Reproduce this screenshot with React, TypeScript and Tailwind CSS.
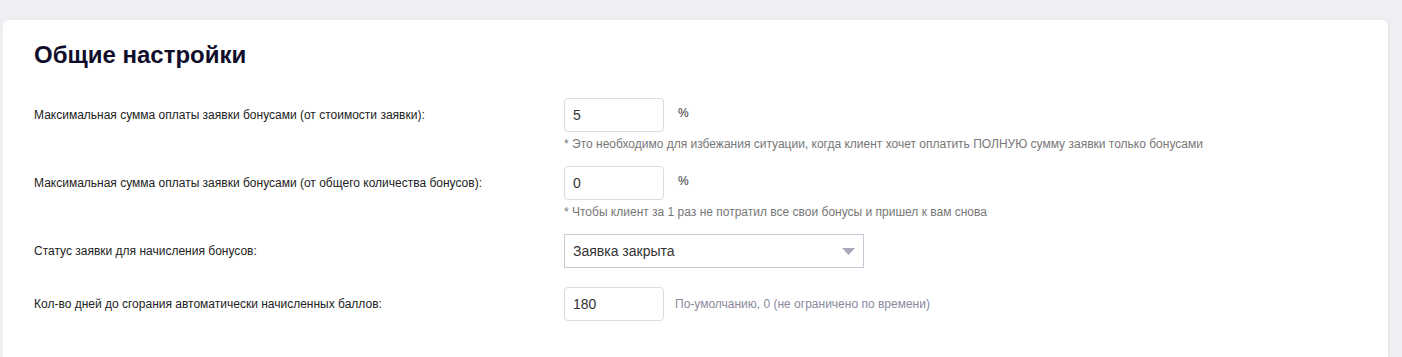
import React from 'react';

const font = { fontFamily: '"Liberation Sans", Arial, sans-serif' };

const Row: React.FC<{ label: string; children: React.ReactNode; className?: string }> = ({ label, children, className }) => (
  <div className={`flex ${className ?? ''}`}>
    <div className="w-[530px] shrink-0 h-[34px] flex items-center text-[12px] text-[#222]">{label}</div>
    <div className="flex flex-col">{children}</div>
  </div>
);

const NumberInput: React.FC<{ value: string }> = ({ value }) => (
  <input
    defaultValue={value}
    className="w-[100px] h-[34px] border border-[#dcdcdc] rounded-[4px] px-[8px] text-[14px] text-[#333] outline-none"
    style={font}
  />
);

export default function App() {
  return (
    <div className="min-h-screen bg-[#efeef3] pt-[20px] pl-[3px] pr-[14px]" style={font}>
      <div className="bg-white rounded-t-[5px] shadow-[1px_0_2px_rgba(0,0,0,0.06)] w-[1385px] h-[337px] pl-[31px] pt-[21px]">
        <h1 className="text-[24px] leading-[28px] font-bold text-[#100d2b]">Общие настройки</h1>

        <Row label="Максимальная сумма оплаты заявки бонусами (от стоимости заявки):" className="mt-[29px]">
          <div className="flex items-center">
            <NumberInput value="5" />
            <span className="ml-[14px] text-[12px] text-[#333] -mt-[4px]">%</span>
          </div>
          <div className="mt-[4px] text-[12px] leading-[16px] text-[#777]">
            * Это необходимо для избежания ситуации, когда клиент хочет оплатить ПОЛНУЮ сумму заявки только бонусами
          </div>
        </Row>

        <Row label="Максимальная сумма оплаты заявки бонусами (от общего количества бонусов):" className="mt-[14px]">
          <div className="flex items-center">
            <NumberInput value="0" />
            <span className="ml-[14px] text-[12px] text-[#333] -mt-[4px]">%</span>
          </div>
          <div className="mt-[4px] text-[12px] leading-[16px] text-[#777]">
            * Чтобы клиент за 1 раз не потратил все свои бонусы и пришел к вам снова
          </div>
        </Row>

        <Row label="Статус заявки для начисления бонусов:" className="mt-[14px]">
          <div className="relative w-[300px] h-[34px] border border-[#c9c7d6] flex items-center px-[8px] text-[14px] text-[#333]">
            Заявка закрыта
            <svg className="absolute right-[8px] top-[13px]" width="13" height="7" viewBox="0 0 13 7">
              <path d="M0 0h13L6.5 7z" fill="#aaa8ba" />
            </svg>
          </div>
        </Row>

        <Row label="Кол-во дней до сгорания автоматически начисленных баллов:" className="mt-[19px]">
          <div className="flex items-center">
            <NumberInput value="180" />
            <span className="ml-[11px] text-[12px] text-[#8b8a9c]">По-умолчанию, 0 (не ограничено по времени)</span>
          </div>
        </Row>
      </div>
    </div>
  );
}
